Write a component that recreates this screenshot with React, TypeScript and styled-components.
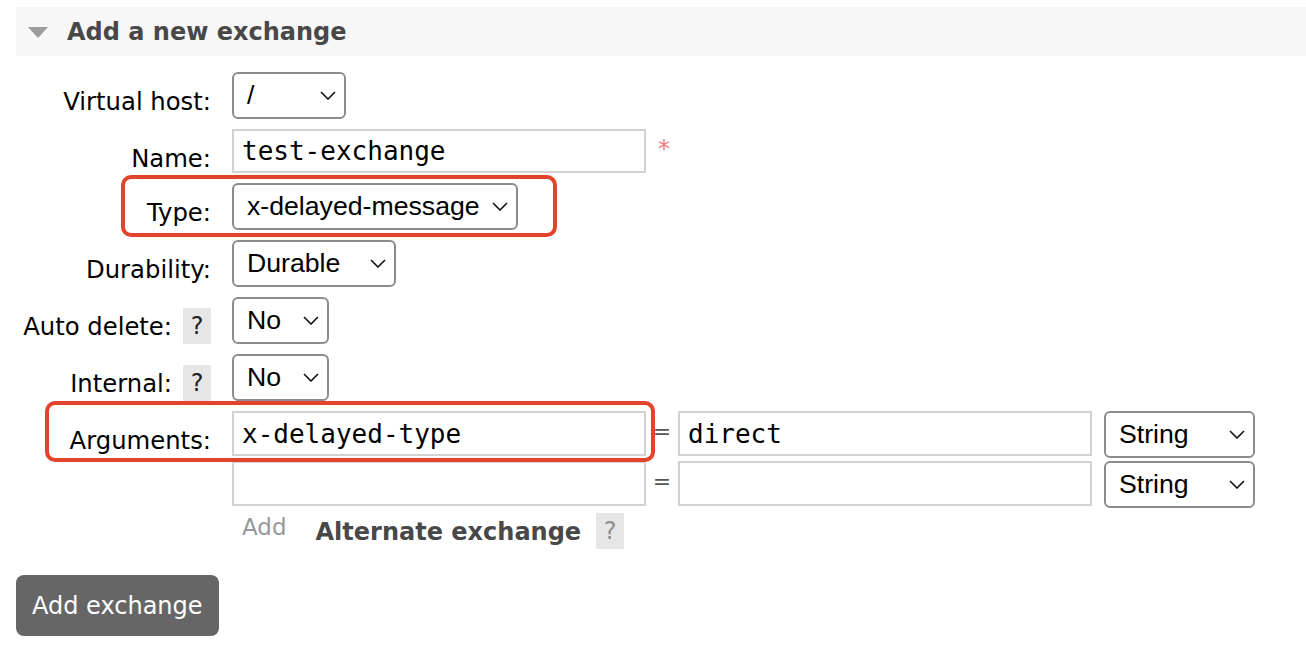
import React from 'react';
import styled, { createGlobalStyle } from 'styled-components';

const GlobalStyle = createGlobalStyle`
  html, body {
    margin: 0;
    padding: 0;
    background: #fff;
  }
  body {
    font-family: 'DejaVu Sans', Verdana, sans-serif;
    color: #000;
  }
`;

const Page = styled.div`
  padding: 7px 0 0 16px;
`;

const SectionHeader = styled.div`
  display: flex;
  align-items: center;
  gap: 19px;
  height: 49px;
  padding-left: 12px;
  background: #f7f7f7;
`;

const Toggle = styled.span`
  width: 0;
  height: 0;
  margin-top: 2px;
  border-left: 10px solid transparent;
  border-right: 10px solid transparent;
  border-top: 11px solid #9c9c9c;
`;

const SectionTitle = styled.h2`
  margin: 0;
  font-size: 24px;
  font-weight: bold;
  color: #484848;
`;

const Form = styled.div`
  display: flex;
  flex-direction: column;
  gap: 10px;
  margin-top: 16px;
`;

const Row = styled.div`
  position: relative;
  display: grid;
  grid-template-columns: 195px auto;
  column-gap: 21px;
  align-items: start;
`;

const LabelCell = styled.div`
  display: flex;
  justify-content: flex-end;
  align-items: flex-start;
  gap: 11px;
`;

const LabelText = styled.span`
  padding-top: 16px;
  font-size: 24.3px;
  line-height: 28px;
  white-space: nowrap;
`;

const HelpBox = styled.span<{ $faint?: boolean; $top?: number }>`
  display: inline-flex;
  align-items: center;
  justify-content: center;
  width: 28px;
  height: 36px;
  margin-top: ${p => p.$top ?? 11}px;
  background: #e6e6e6;
  color: ${p => (p.$faint ? '#8f8f8f' : '#222')};
  font-size: 24px;
`;

const Controls = styled.div`
  display: flex;
  align-items: flex-start;
`;

const SelectBox = styled.div<{ $w: number }>`
  box-sizing: border-box;
  display: flex;
  align-items: center;
  justify-content: space-between;
  width: ${p => p.$w}px;
  height: 47px;
  padding: 0 8px 0 13px;
  border: 2px solid #8c8c8c;
  border-radius: 6px;
  background: #fff;
  font-family: 'Liberation Sans', Arial, sans-serif;
  font-size: 26.67px;
  color: #000;
  white-space: nowrap;
`;

const TextField = styled.input<{ $h?: number }>`
  box-sizing: border-box;
  width: 414px;
  height: ${p => p.$h ?? 45}px;
  margin: 0;
  padding: 0 8px;
  border: 2px solid #d2d2d2;
  border-radius: 0;
  outline: none;
  background: #fff;
  font-family: 'DejaVu Sans Mono', monospace;
  font-size: 26px;
  color: #000;
`;

const Required = styled.span`
  margin: 6px 0 0 12px;
  font-size: 24px;
  color: #ef7c7c;
`;

const ArgList = styled.div`
  display: flex;
  flex-direction: column;
  gap: 3px;
`;

const ArgLine = styled.div`
  display: flex;
  align-items: flex-start;
`;

const EqSign = styled.span`
  width: 32px;
  padding-top: 8px;
  text-align: center;
  font-size: 22px;
  color: #555;
`;

const TypeSlot = styled.div`
  margin-left: 12px;
`;

const AddLine = styled.div`
  display: flex;
  align-items: flex-start;
`;

const AddLink = styled.span`
  padding: 3px 0 0 10px;
  font-size: 23px;
  color: #999;
`;

const QuickLabel = styled.span`
  margin: 7px 15px 0 29px;
  font-size: 24px;
  font-weight: bold;
  color: #484848;
`;

const Highlight = styled.div<{ $left: number; $top: number; $w: number; $h: number }>`
  position: absolute;
  left: ${p => p.$left}px;
  top: ${p => p.$top}px;
  width: ${p => p.$w}px;
  height: ${p => p.$h}px;
  box-sizing: border-box;
  border: 4px solid #e2442b;
  border-radius: 10px;
  pointer-events: none;
`;

const SubmitButton = styled.button`
  margin-top: 26px;
  height: 61px;
  padding: 0 16px;
  border: none;
  border-radius: 8px;
  background: #666;
  color: #fff;
  font-family: 'DejaVu Sans', Verdana, sans-serif;
  font-size: 24px;
`;

const Chevron = () => (
  <svg width="16" height="9" viewBox="0 0 16 9">
    <polyline points="1,1 8,8 15,1" fill="none" stroke="#111" strokeWidth="1.6" />
  </svg>
);

const Select: React.FC<{ value: string; width: number }> = ({ value, width }) => (
  <SelectBox $w={width}>
    <span>{value}</span>
    <Chevron />
  </SelectBox>
);

const Field: React.FC<{ label: string; help?: boolean; children: React.ReactNode }> = ({
  label,
  help,
  children,
}) => (
  <>
    <LabelCell>
      <LabelText>{label}</LabelText>
      {help && <HelpBox>?</HelpBox>}
    </LabelCell>
    <Controls>{children}</Controls>
  </>
);

export default function App() {
  return (
    <>
      <GlobalStyle />
      <Page>
        <SectionHeader>
          <Toggle />
          <SectionTitle>Add a new exchange</SectionTitle>
        </SectionHeader>

        <Form>
          <Row>
            <Field label="Virtual host:">
              <Select value="/" width={114} />
            </Field>
          </Row>
          <Row>
            <Field label="Name:">
              <TextField defaultValue="test-exchange" $h={44} />
              <Required>*</Required>
            </Field>
          </Row>
          <Row>
            <Highlight $left={105} $top={-8} $w={436} $h={62} />
            <Field label="Type:">
              <Select value="x-delayed-message" width={286} />
            </Field>
          </Row>
          <Row>
            <Field label="Durability:">
              <Select value="Durable" width={164} />
            </Field>
          </Row>
          <Row>
            <Field label="Auto delete:" help>
              <Select value="No" width={97} />
            </Field>
          </Row>
          <Row>
            <Field label="Internal:" help>
              <Select value="No" width={97} />
            </Field>
          </Row>
          <Row>
            <Highlight $left={29} $top={-10} $w={610} $h={61} />
            <Field label="Arguments:">
              <ArgList>
                <ArgLine>
                  <TextField defaultValue="x-delayed-type" />
                  <EqSign>=</EqSign>
                  <TextField defaultValue="direct" />
                  <TypeSlot>
                    <Select value="String" width={151} />
                  </TypeSlot>
                </ArgLine>
                <ArgLine>
                  <TextField defaultValue="" />
                  <EqSign>=</EqSign>
                  <TextField defaultValue="" />
                  <TypeSlot>
                    <Select value="String" width={151} />
                  </TypeSlot>
                </ArgLine>
                <AddLine>
                  <AddLink>Add</AddLink>
                  <QuickLabel>Alternate exchange</QuickLabel>
                  <HelpBox $faint $top={2}>?</HelpBox>
                </AddLine>
              </ArgList>
            </Field>
          </Row>
        </Form>

        <SubmitButton>Add exchange</SubmitButton>
      </Page>
    </>
  );
}
